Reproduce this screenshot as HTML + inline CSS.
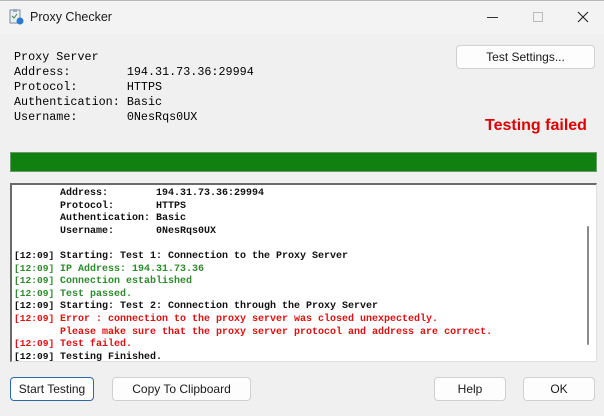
<!DOCTYPE html>
<html><head><style>
*{margin:0;padding:0;box-sizing:border-box}
body{width:604px;height:416px;background:#f0f0f0;position:relative;overflow:hidden;font-family:"Liberation Sans",sans-serif}
.tb{position:absolute;left:0;top:0;width:604px;height:34px;background:#f3f3f3;border-top:1px solid #b8b8b8}
.abs{position:absolute}
pre{font-family:"Liberation Mono",monospace;margin:0}
.hdr{left:14px;top:50px;font-size:11.75px;line-height:15px;color:#000}
.btn{position:absolute;background:#fdfdfd;border:1px solid #d0d0d0;border-radius:4px;font-size:12px;color:#1a1a1a;text-align:center;line-height:22px}
.log{position:absolute;left:10px;top:183px;width:587px;height:179px;background:#fff;border-top:2px solid #6a6a6a;border-left:2px solid #6a6a6a;border-right:1px solid #e0e0e0;border-bottom:1px solid #e0e0e0}
.log pre{position:absolute;left:2px;top:3px;font-size:10px;line-height:12.6px;font-weight:bold;color:#111}
.t{display:inline-block;width:46px;font-size:9.6px;line-height:9px;font-weight:bold}
.g{color:#2e8b2e}.r{color:#e01010}
</style></head><body>
<div class="tb"></div>
<svg class="abs" style="left:9px;top:8px" width="16" height="18" viewBox="0 0 16 18"><rect x="1" y="2" width="10" height="13" fill="#e8eef4" stroke="#7a8a9a"/><rect x="4" y="1" width="4" height="3" fill="#9ab"/><path d="M3 8l2 2 3-4" stroke="#3a8a3a" fill="none"/><circle cx="11" cy="13" r="3.5" fill="#2a7ad0"/></svg>
<div class="abs" style="left:30px;top:10px;font-size:12.5px;color:#1a1a1a">Proxy Checker</div>
<div class="abs" style="left:487px;top:17px;width:11px;height:1px;background:#333"></div>
<div class="abs" style="left:533px;top:12px;width:10px;height:10px;border:1px solid #bbb"></div>
<svg class="abs" style="left:577px;top:11px" width="12" height="12"><path d="M1 1L11 11M11 1L1 11" stroke="#222" stroke-width="1.1"/></svg>
<pre class="abs hdr">Proxy Server
Address:        194.31.73.36:29994
Protocol:       HTTPS
Authentication: Basic
Username:       0NesRqs0UX</pre>
<div class="btn" style="left:456px;top:45px;width:139px;height:24px">Test Settings...</div>
<div class="abs" style="left:485px;top:117px;font-size:16px;font-weight:bold;color:#e00000">Testing failed</div>
<div class="abs" style="left:10px;top:152px;width:587px;height:20px;background:#108010;border:1px solid #6a9a6a"></div>
<div class="log"><pre><span class="t"></span>Address:        194.31.73.36:29994
<span class="t"></span>Protocol:       HTTPS
<span class="t"></span>Authentication: Basic
<span class="t"></span>Username:       0NesRqs0UX

<span class="t">[12:09]</span>Starting: Test 1: Connection to the Proxy Server
<span class="g"><span class="t">[12:09]</span>IP Address: 194.31.73.36
<span class="t">[12:09]</span>Connection established
<span class="t">[12:09]</span>Test passed.</span>
<span class="t">[12:09]</span>Starting: Test 2: Connection through the Proxy Server
<span class="r"><span class="t">[12:09]</span>Error : connection to the proxy server was closed unexpectedly.
<span class="t"></span>Please make sure that the proxy server protocol and address are correct.
<span class="t">[12:09]</span>Test failed.</span>
<span class="t">[12:09]</span>Testing Finished.</pre>
<div class="abs" style="left:575px;top:41px;width:2px;height:119px;background:#8a8a8a;border-radius:1px"></div>
</div>
<div class="btn" style="left:10px;top:377px;width:84px;height:24px;border-color:#2a6aa8">Start Testing</div>
<div class="btn" style="left:112px;top:377px;width:139px;height:24px">Copy To Clipboard</div>
<div class="btn" style="left:434px;top:377px;width:72px;height:24px">Help</div>
<div class="btn" style="left:523px;top:377px;width:72px;height:24px">OK</div>
</body></html>
